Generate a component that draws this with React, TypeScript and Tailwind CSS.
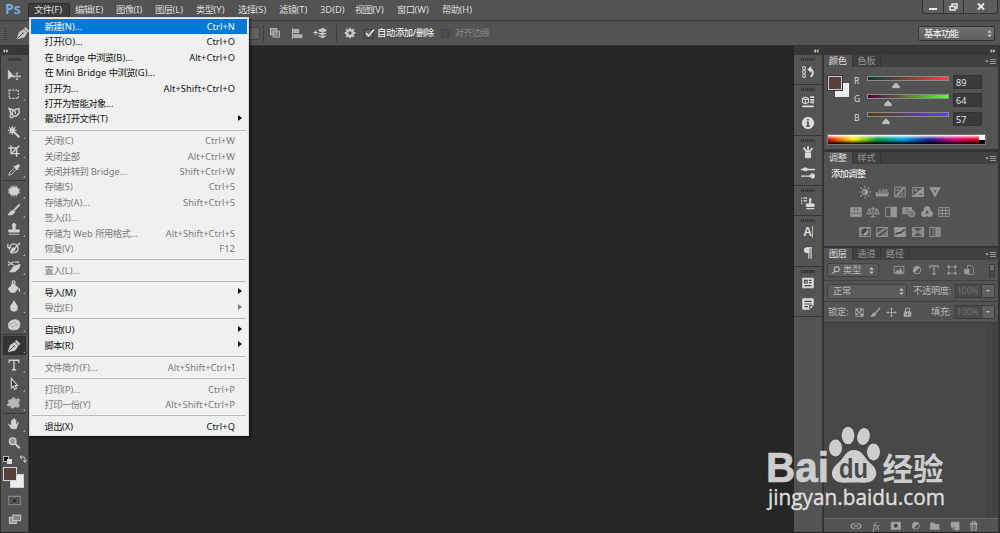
import React from "react";

type MenuEntry = {
  label?: string;
  keys?: string;
  off?: boolean;
  sub?: boolean;
  active?: boolean;
};

const menus = [
  { label: "编辑(E)", width: "w-[41px]" },
  { label: "图像(I)", width: "w-[39px]" },
  { label: "图层(L)", width: "w-[41px]" },
  { label: "类型(Y)", width: "w-[42px]" },
  { label: "选择(S)", width: "w-[41px]" },
  { label: "滤镜(T)", width: "w-[41px]" },
  { label: "3D(D)", width: "w-[35px]" },
  { label: "视图(V)", width: "w-[42px]" },
  { label: "窗口(W)", width: "w-[45px]" },
  { label: "帮助(H)", width: "w-[41px]" },
];

// an empty entry is a separator
const fileMenu: MenuEntry[] = [
  { label: "新建(N)...", keys: "Ctrl+N", active: true },
  { label: "打开(O)...", keys: "Ctrl+O" },
  { label: "在 Bridge 中浏览(B)...", keys: "Alt+Ctrl+O" },
  { label: "在 Mini Bridge 中浏览(G)..." },
  { label: "打开为...", keys: "Alt+Shift+Ctrl+O" },
  { label: "打开为智能对象..." },
  { label: "最近打开文件(T)", sub: true },
  {},
  { label: "关闭(C)", keys: "Ctrl+W", off: true },
  { label: "关闭全部", keys: "Alt+Ctrl+W", off: true },
  { label: "关闭并转到 Bridge...", keys: "Shift+Ctrl+W", off: true },
  { label: "存储(S)", keys: "Ctrl+S", off: true },
  { label: "存储为(A)...", keys: "Shift+Ctrl+S", off: true },
  { label: "签入(I)...", off: true },
  { label: "存储为 Web 所用格式...", keys: "Alt+Shift+Ctrl+S", off: true },
  { label: "恢复(V)", keys: "F12", off: true },
  {},
  { label: "置入(L)...", off: true },
  {},
  { label: "导入(M)", sub: true },
  { label: "导出(E)", sub: true, off: true },
  {},
  { label: "自动(U)", sub: true },
  { label: "脚本(R)", sub: true },
  {},
  { label: "文件简介(F)...", keys: "Alt+Shift+Ctrl+I", off: true },
  {},
  { label: "打印(P)...", keys: "Ctrl+P", off: true },
  { label: "打印一份(Y)", keys: "Alt+Shift+Ctrl+P", off: true },
  {},
  { label: "退出(X)", keys: "Ctrl+Q" },
];

// All glyphs are drawn on a 16x16 grid
const glyphs: Record<string, React.ReactNode> = {
  move: (
    <>
      <path d="M1.500 2.500v10L4.500 10H8z" fill="currentColor" />
      <path d="M11.500 5.500v8M7.500 9.500h8M10.300 6.700l1.200-1.400 1.200 1.400M10.300 12.300l1.200 1.400 1.200-1.400M8.700 8.300L7.300 9.500l1.400 1.200M14.300 8.300l1.400 1.200-1.400 1.200" />
    </>
  ),
  marquee: <rect x="2.500" y="3.500" width="10.500" height="9.500" strokeDasharray="2.200 1.300" strokeWidth="1.300" />,
  lasso: (
    <>
      <path d="M5 10L2.500 3l5 1.500L13.500 3l.5 5-3.500 3.500H7" strokeWidth="1.700" />
      <path d="M6 9.500V7a1.800 1.800 0 0 1 3.600 0v2M5 9.500c-2.500 1-2 4 .5 4 2 0 2.500-2.500 0-4z" strokeWidth="1.400" />
    </>
  ),
  wand: (
    <>
      <path d="M7 7l7 7" strokeWidth="2.400" />
      <path d="M6 1v3M6 8v3M1 6h3M8 6h3M2.500 2.500l2 2M9.500 2.500l-2 2M2.500 9.500l2-2" strokeWidth="1.400" />
      <circle cx="6" cy="6" r="2.500" fill="currentColor" />
    </>
  ),
  crop: <path d="M4.500 1.500V11h10M1.500 4.500H11v10M6 10l8-8" strokeWidth="1.700" />,
  dropper: (
    <>
      <path d="M2 14l1-3 6-6 2 2-6 6z" />
      <path d="M8 4l4 4 1-1-1-1 2-2c1-1-1-3-2-2l-2 2-1-1z" fill="currentColor" />
    </>
  ),
  heal: (
    <>
      <rect x="3" y="4" width="10" height="8" rx="3" fill="currentColor" />
      <path d="M5 2v12M7 1.500v13M9 1.500v13M11 2v12M1 6h14M1 8h14M1 10h14" strokeWidth=".9" />
    </>
  ),
  brush: (
    <>
      <path d="M14.500 1.500L8 8.500" strokeWidth="2" />
      <path d="M8.800 9.500C8.500 13 5 14 1 13.500c2-.5 2-4 5-5z" fill="currentColor" />
    </>
  ),
  stamp: (
    <path d="M8 1.500a2.300 2.300 0 0 1 1.300 4V9H14v2.500H2V9h4.700V5.500A2.300 2.300 0 0 1 8 1.500zM2 14h12" fill="currentColor" />
  ),
  historyBrush: (
    <>
      <path d="M3 10a5 5 0 1 1 9 1c-1.500 3-6 3.500-8.500 1.500M1 3.500v4h4" strokeWidth="1.400" />
      <path d="M15 2L9 8M9 9c0 2-3 3.500-5 3 2-.5 1-3 3-4z" fill="currentColor" strokeWidth="1.600" />
    </>
  ),
  eraser: (
    <>
      <path d="M3 13.500L8 7l7-2-1.500 4.500-4.500 4z" fill="currentColor" />
      <path d="M1 2l7 4M1 6l7-4M9 2.500h5" strokeWidth="1.500" />
    </>
  ),
  bucket: (
    <>
      <path d="M1.500 10L7 4l6 5-4 5H4z" fill="currentColor" />
      <path d="M6 8V2.500a1.500 1.500 0 0 1 3 0V5M14 9.500v4" strokeWidth="1.500" />
    </>
  ),
  drop: <path d="M8 2c1 3 4 5 4 8a4 4 0 0 1-8 0c0-3 3-5 4-8z" fill="currentColor" />,
  sponge: (
    <>
      <path d="M3 4.500c3-3 8-3 10.500-1 2 2 1 8-1 9-3 1.500-8.500 1.500-10-.5-1-1-1-6.500.5-7.500z" fill="currentColor" />
      <path d="M4 7l2-1M7 5.500l3-.5M5 10h3M9 8h3M3 8.500h1" stroke="#8a8a8a" strokeWidth=".9" />
    </>
  ),
  pen: (
    <>
      <path d="M1.500 14.500L4 7l5-3 3.500 3.500-3 5z" fill="currentColor" />
      <path d="M10 2l4.500 4.500" strokeWidth="2.300" />
      <path d="M2 14l5-5" stroke="#444" />
      <circle cx="7.800" cy="8.300" r="1" fill="#444" stroke="none" />
    </>
  ),
  type: <path d="M2.500 5.500V2.500h11v3M8 2.500v11M5.500 13.500h5" strokeWidth="1.600" />,
  arrow: <path d="M5 1.500v11l2.300-2 1.500 3.500 2-.8-1.500-3.300H12z" fill="#363636" strokeWidth="1.300" />,
  shape: <path d="M5.500 5.500C4.500 1 9 1 10 4.500c4-3 6 0 2.500 3.500C16 12 13 14 9.500 12c-2.500 3-6 2-5-1.500-5 2.500-5-1-2-2.500-2.500-3 0-5 3-2.500z" fill="currentColor" opacity=".78" />,
  hand: (
    <path d="M5 14L1.500 9c-.5-1.200 1-1.600 2-.5L4.500 9V4c0-1.200 1.500-1.200 1.500 0V2.500c0-1.200 1.600-1.200 1.600 0V2c0-1.200 1.600-1.200 1.600 0v1c0-1.200 1.600-1 1.600.3V8l1-2c.6-1 2-.5 1.500.7L12 11l-1 3z" fill="currentColor" stroke="#555" strokeWidth=".4" />
  ),
  zoom: (
    <>
      <circle cx="6.500" cy="6" r="3.800" strokeWidth="1.500" fill="#999" />
      <path d="M9.500 9l5 5" strokeWidth="2.200" />
    </>
  ),
  mask: (
    <>
      <rect x="2" y="3.500" width="12" height="9" fill="#484848" stroke="#999" />
      <circle cx="8" cy="8" r="3" stroke="#999" strokeDasharray="1.200 .8" fill="#333" />
    </>
  ),
  screen: (
    <>
      <rect x="1.500" y="6" width="8" height="7" fill="#999" />
      <rect x="5.500" y="3.500" width="9" height="6.500" fill="#888" />
    </>
  ),
  history: (
    <>
      <path d="M2 2h3v3H2zM2 6.500h3v3H2zM2 11h3v3H2z" />
      <path d="M11 13.500c4-3 3-8.500-1-8.500" strokeWidth="2" />
      <path d="M11.500 1.500v7L7.500 5z" fill="currentColor" strokeWidth=".5" />
    </>
  ),
  props: (
    <>
      <path d="M1.500 4L5 2.500 8.500 4v4.500L5 10 1.500 8.500zM1.500 4L5 5.500 8.500 4M5 5.500V10" strokeWidth="1.200" />
      <path d="M10.500 2.500H15M10.500 5.500H15M10.500 8.500H15M1.500 13h13" strokeWidth="2" />
    </>
  ),
  info: (
    <>
      <circle cx="8" cy="8" r="6.500" fill="currentColor" />
      <path d="M6.500 7H8v4.500M6 11.500h4M8 3.500v1.600" stroke="#444" strokeWidth="1.700" />
    </>
  ),
  brushes: (
    <>
      <path d="M5 9h6v5.500H5z" fill="currentColor" />
      <path d="M6.500 8L3 3M8 8V1.500M9.500 8L13 3.500" strokeWidth="2" />
    </>
  ),
  presets: (
    <>
      <path d="M0 4h16M0 11.500h16" strokeWidth="1.500" />
      <path d="M2 4c2-3 4-2 6 0-2 2-4 2-6 0zM10 11.500c1-3 3-3 5-2v4c-2 1-4 0-5-2z" fill="currentColor" />
    </>
  ),
  clone: (
    <>
      <path d="M9.500 3h2l-.5 6h4v3H6V9h4z" fill="currentColor" />
      <path d="M0 2.500h1.500M3 2.500h4M0 5.500h1.500M3 5.500h4M0 8.500h1.500M6 14.500h9" strokeWidth="1.300" />
    </>
  ),
  paragraph: (
    <>
      <path d="M9 2H6.500a2.800 2.800 0 0 0 0 5.600H9z" fill="currentColor" />
      <path d="M12.500 2H7M9 2v12.500M11.500 2v12.500" strokeWidth="1.300" />
    </>
  ),
  comps: (
    <>
      <rect x="2" y="2.500" width="12" height="11" fill="currentColor" />
      <path d="M4 5h3v3H4zM9 5h3M9 7.500h3M4 11h8" stroke="#444" strokeWidth="1.300" />
    </>
  ),
  notes: (
    <>
      <path d="M2 2h12v8l-4 4H2z" fill="currentColor" />
      <path d="M4 5h8M4 8h8M4 11h4M10 14v-4h4" stroke="#444" strokeWidth="1.300" />
    </>
  ),
  sun: (
    <>
      <circle cx="8" cy="8" r="3" strokeWidth="1.300" />
      <path d="M8 5a3 3 0 0 1 0 6z" fill="currentColor" />
      <path d="M8 1v2M8 13v2M1 8h2M13 8h2M3 3l1.500 1.500M11.500 11.500L13 13M13 3l-1.500 1.500M3 13l1.500-1.500" strokeWidth="1.400" />
    </>
  ),
  levels: (
    <>
      <path d="M1 11.500h14" strokeWidth="3" />
      <path d="M1.500 8v3M3.500 7v4M5.500 4.500V11M7.500 7v4M9.500 4.500V11M11.500 5.500V11M13.500 4.500V11M15 8v3" strokeWidth="1.100" />
    </>
  ),
  curves: (
    <>
      <rect x="2" y="2.500" width="12" height="11" />
      <path d="M6 3v10M10 3v10M2 6h12M2 10h12" strokeWidth=".6" />
      <path d="M2.500 13C9 12 7 4 13.500 3" strokeWidth="1.500" />
    </>
  ),
  exposure: (
    <>
      <rect x="2" y="3" width="12" height="10" />
      <path d="M2 13L14 3v10z" fill="currentColor" />
      <path d="M3.500 6h4M5.500 4v4" />
      <path d="M9 10.500h4" stroke="#444" />
    </>
  ),
  vibrance: <path d="M2 3h12L8 13.500zM5.500 5.500L8 10l2.500-4.500z" fill="currentColor" fillRule="evenodd" />,
  hue: (
    <>
      <rect x="2" y="3" width="12" height="10" fill="currentColor" />
      <path d="M6 3v4M10 3v4" stroke="#555" />
      <path d="M3 9.500h10" stroke="#777" strokeWidth="2" />
    </>
  ),
  balance: <path d="M8 2v11M5 13.500h6M3 4.500h10M3.500 5L1 10h5zM12.500 5L10 10h5z" strokeWidth="1.200" />,
  bw: (
    <>
      <rect x="2" y="2.500" width="12" height="11" />
      <path d="M8 3h6v10H8z" fill="currentColor" />
    </>
  ),
  photo: (
    <>
      <path d="M1 3h10v7H1z" fill="currentColor" />
      <circle cx="5.500" cy="6.500" r="2" stroke="#555" />
      <circle cx="11" cy="10" r="3.800" fill="#777" />
    </>
  ),
  mixer: (
    <>
      <circle cx="8" cy="5" r="3.300" fill="currentColor" />
      <circle cx="5" cy="10" r="3.300" fill="currentColor" />
      <circle cx="11" cy="10" r="3.300" fill="currentColor" />
      <path d="M8 6.500L6.500 9.500h3z" fill="#555" stroke="#555" />
    </>
  ),
  table: (
    <>
      <rect x="2" y="3" width="12" height="10" />
      <path d="M6 3v10M10 3v10M2 6.300h12M2 9.600h12" />
    </>
  ),
  invert: (
    <>
      <rect x="2" y="3" width="12" height="10" />
      <path d="M2 3h12L2 13z" fill="currentColor" opacity=".7" />
      <path d="M10.500 5.500a3.500 3.500 0 0 1-5 5z" fill="currentColor" />
      <path d="M10.500 5.500a3.500 3.500 0 0 0-5 5z" fill="#444" stroke="#444" />
    </>
  ),
  posterize: (
    <>
      <rect x="2" y="3" width="12" height="10" />
      <path d="M2 10l10-7h2L2 12z" fill="currentColor" opacity=".8" />
      <path d="M6 13l8-6v6z" fill="currentColor" opacity=".6" />
    </>
  ),
  threshold: (
    <>
      <rect x="2" y="3" width="12" height="10" fill="currentColor" />
      <path d="M2.500 11l3-2h3l5-4" stroke="#454545" strokeWidth="2" />
    </>
  ),
  selective: (
    <>
      <rect x="2" y="3" width="12" height="10" />
      <path d="M2 3l6 5-6 5zM14 3L8 8l6 5z" fill="currentColor" opacity=".75" />
    </>
  ),
  gradient: (
    <>
      <rect x="2" y="3" width="12" height="10" />
      <path d="M5 3.500h8.500v9H5z" fill="currentColor" opacity=".35" stroke="none" />
      <path d="M9 3.500h4.500v9H9z" fill="currentColor" opacity=".6" stroke="none" />
    </>
  ),
  image: (
    <>
      <rect x="1.500" y="3" width="13" height="10" />
      <path d="M3 12l3-4 2 2 2-4 3 6z" fill="currentColor" />
    </>
  ),
  adjust: (
    <>
      <circle cx="8" cy="8" r="5" strokeWidth="1.300" />
      <path d="M11.500 4.500A5 5 0 0 0 4.500 11.500z" fill="currentColor" />
    </>
  ),
  frame: (
    <>
      <rect x="4" y="4" width="8" height="8" />
      <path d="M2 2h3v3H2zM11 2h3v3h-3zM2 11h3v3H2zM11 11h3v3h-3z" fill="currentColor" strokeWidth=".3" />
    </>
  ),
  smart: (
    <>
      <path d="M6 2h5l3 3v9H6z" />
      <path d="M2 7h6v6H2z" fill="currentColor" />
    </>
  ),
  checker: (
    <>
      <rect x="2.500" y="2.500" width="11" height="11" />
      <path d="M3 3h3v3H3zM9 3h3v3H9zM6 6h3v3H6zM3 9h3v3H3zM9 9h4v4H9z" fill="currentColor" stroke="none" />
    </>
  ),
  cross: <path d="M8 1.500v13M1.500 8h13M6 3.500l2-2 2 2M6 12.500l2 2 2-2M3.500 6l-2 2 2 2M12.500 6l2 2-2 2" strokeWidth="1.400" />,
  lock: (
    <>
      <rect x="3" y="7" width="10" height="7" fill="currentColor" />
      <path d="M5 7V4.500a3 3 0 0 1 6 0V7" strokeWidth="1.600" />
      <path d="M8 9v3" stroke="#444" strokeWidth="1.500" />
    </>
  ),
  link: <path d="M7 5H4.500a3 3 0 0 0 0 6H7M9 5h2.500a3 3 0 0 1 0 6H9M5 8h6" strokeWidth="1.500" />,
  layerMask: (
    <>
      <rect x="1.500" y="3" width="13" height="10" fill="currentColor" />
      <circle cx="8" cy="8" r="2.700" fill="#444" stroke="none" />
    </>
  ),
  folder: <path d="M2 4h5l1.500 2H14v7H2z" fill="currentColor" />,
  sheet: (
    <>
      <path d="M3 3h11v11H9V9H3z" fill="currentColor" />
      <path d="M3.500 10.500h4v3.500z" />
    </>
  ),
  trash: <path d="M2.500 4.500h11M6 4V2.500h4V4M4 6l.5 8h7l.5-8zM6.500 7v5M9.500 7v5" strokeWidth="1.400" />,
  pathOps: (
    <>
      <rect x="2" y="2" width="8.500" height="8.500" fill="#888" />
      <rect x="5.500" y="5.500" width="8.500" height="8" fill="#777" />
      <path d="M7 7h3v3H7z" fill="#444" />
    </>
  ),
  align: (
    <>
      <path d="M2 1.500v13" strokeWidth="1.300" />
      <path d="M3.500 3h6v4h-6zM3.500 9.500h10V13h-10z" fill="#aaa" />
    </>
  ),
  arrange: (
    <>
      <path d="M6 5l5-2.500L15.500 5 11 7.500zM6 8l5 2.500L15.500 8M6 11l5 2.500 4.500-2.500" fill="currentColor" />
      <path d="M.5 7.500h5M3 5v5" strokeWidth="1.400" />
    </>
  ),
  gear: (
    <>
      <circle cx="8" cy="8" r="3.900" strokeWidth="3.200" />
      <path d="M8 1v2M8 13v2M1 8h2M13 8h2M3 3l1.500 1.500M11.500 11.500L13 13M13 3l-1.500 1.500M4.500 11.500L3 13" strokeWidth="2.400" />
    </>
  ),
};

const Glyph = ({ name, className = "size-[14px]" }: { name: string; className?: string }) => (
  <svg viewBox="0 0 16 16" className={`shrink-0 ${className}`} fill="none" stroke="currentColor" strokeWidth="1">
    {glyphs[name]}
  </svg>
);

const toolGroups = [
  ["move", "marquee", "lasso", "wand", "crop", "dropper"],
  ["heal", "brush", "stamp", "historyBrush", "eraser", "bucket", "drop", "sponge"],
  ["pen", "type", "arrow", "shape"],
  ["hand", "zoom"],
];

const dockGroups = [
  { icons: ["history"], height: "h-[30px]" },
  { icons: ["props", "info"], height: "h-[51px]" },
  { icons: ["brushes", "presets"], height: "h-[50px]" },
  { icons: ["clone"], height: "h-[30px]" },
  { icons: ["character", "paragraph"], height: "h-[51px]" },
  { icons: ["comps", "notes"], height: "h-[50px]" },
];

const channels = [
  { name: "R", value: 89, bar: "bg-[linear-gradient(90deg,#004039,#ff4039)]" },
  { name: "G", value: 64, bar: "bg-[linear-gradient(90deg,#590039,#59ff39)]" },
  { name: "B", value: 57, bar: "bg-[linear-gradient(90deg,#594000,#5940ff)]" },
];

const adjustments = [
  ["sun", "levels", "curves", "exposure", "vibrance"],
  ["hue", "balance", "bw", "photo", "mixer", "table"],
  ["invert", "posterize", "threshold", "selective", "gradient"],
];

const Grip = () => (
  <div className="mx-auto h-[3px] w-[14px] shrink-0 bg-[repeating-linear-gradient(90deg,#333_0_1px,#484848_1px_2px)]" />
);

const Chevrons = ({ left = false }: { left?: boolean }) => (
  <svg viewBox="0 0 6 5" className={`h-[4px] w-[6px] ${left ? "rotate-180" : ""}`} fill="#c8c8c8">
    <path d="M0 0l2.700 2.500L0 5zM3.200 0L6 2.500 3.200 5z" />
  </svg>
);

const UpDown = () => (
  <svg viewBox="0 0 5 8" className="h-[7px] w-[5px]" fill="#c4c4c4">
    <path d="M0 3l2.500-3L5 3zM0 5h5L2.500 8z" />
  </svg>
);

// Chinese characters are set tighter than the Latin runs beside them
const Label = ({ text }: { text: string }) => (
  <span className="flex-1 whitespace-pre">
    {text.split(/([\u4e00-\u9fff]+)/).map((part, i) => (
      <span key={i} className={i % 2 ? "tracking-[-0.53px]" : "tracking-[0.02px]"}>
        {part}
      </span>
    ))}
  </span>
);

const FileMenu = () => (
  <div className="absolute left-[29px] top-[17px] z-10 h-[419px] w-[219.500px] border border-[#d8d8d8] bg-[#f0f0f0] p-px text-[9.300px] shadow-[2px_2px_2px_rgba(0,0,0,.45)]">
    {fileMenu.map((item, i) =>
      item.label ? (
        <div
          key={i}
          className={`flex h-[15.400px] items-center pl-[13.500px] pt-[0.600px] ${item.sub ? "pr-[5px]" : "pr-[11.500px]"} ${
            item.active ? "bg-[#0078d7] text-white" : item.off ? "text-[#7b7b7b]" : "text-[#111]"
          }`}
        >
          <Label text={item.label} />
          {item.keys && <span className="whitespace-nowrap tracking-[0.080px]">{item.keys}</span>}
          {item.sub && (
            <svg viewBox="0 0 4 6" className="-mt-[3px] h-[6px] w-[4px]" fill="currentColor">
              <path d="M0 0l4 3-4 3z" />
            </svg>
          )}
        </div>
      ) : (
        <div key={i} className="flex h-[6.550px] items-center px-[1px]">
          <div className="h-px w-full bg-[#bbb]" />
        </div>
      )
    )}
  </div>
);

const MenuBar = () => (
  <div className="flex h-[20px] shrink-0 bg-[#535353] text-[9.300px] text-[#dcdcdc]">
    <div className="w-[28px] pl-[5px] font-['Open_Sans'] text-[14px] font-bold leading-[18px] text-[#78a9d8]">Ps</div>
    <div className="mt-[3px] h-[17px] w-[42px] rounded-t-[2px] border border-[#2c2c2c] bg-[#3c3c3c] pl-[5px] leading-[12px]">
      <Label text="文件(F)" />
    </div>
    <div className="flex flex-1 pl-[5px] leading-[20px]">
      {menus.map((menu) => (
        <div key={menu.label} className={menu.width}>
          <Label text={menu.label} />
        </div>
      ))}
    </div>
    <div className="mr-[2px] flex h-[14px] rounded-b-[3px] border border-t-0 border-[#353535] bg-[#5d5d5d]">
      <div className="flex w-[21px] items-center justify-center border-r border-[#353535]">
        <div className="mt-[4px] h-[2px] w-[8px] bg-[#e8e8e8]" />
      </div>
      <div className="flex w-[20px] items-center justify-center border-r border-[#353535] text-[#e8e8e8]">
        <svg viewBox="0 0 9 8" className="h-[8px] w-[9px]" fill="none" stroke="currentColor" strokeWidth="1.500">
          <path d="M3 3V1h5v4H6M1 3.500h5V7H1z" />
        </svg>
      </div>
      <div className="flex w-[33px] items-center justify-center text-[#e8e8e8]">
        <svg viewBox="0 0 8 7" className="h-[7px] w-[8px]" stroke="currentColor" strokeWidth="2">
          <path d="M1 .5l6 6M7 .5l-6 6" />
        </svg>
      </div>
    </div>
  </div>
);

const OptionsBar = () => (
  <div className="flex h-[26px] shrink-0 items-center border-y border-t-[#383838] border-b-[#333] bg-[#535353] text-[9.300px] text-[#c8c8c8]">
    <div className="ml-[4px] h-[14px] w-[3px] bg-[repeating-linear-gradient(0deg,#3b3b3b_0_1px,#5a5a5a_1px_2px)]" />
    <Glyph name="pen" className="ml-[9px] size-[14px]" />
    <div className="ml-[209px] h-[13px] w-[21px] rounded-[2px] border border-[#434343] bg-[#606060]" />
    <div className="ml-[3px] h-[17px] w-px bg-[#3c3c3c]" />
    <Glyph name="pathOps" className="ml-[5px] size-[12px]" />
    <Glyph name="align" className="ml-[10px] size-[13px]" />
    <Glyph name="arrange" className="ml-[9px] size-[14px]" />
    <div className="ml-[9px] h-[17px] w-px bg-[#3c3c3c]" />
    <Glyph name="gear" className="ml-[7px] size-[12px]" />
    <svg viewBox="0 0 11 11" className="ml-[8px] size-[11px]" fill="none">
      <rect x=".5" y="1.500" width="8.500" height="8.500" fill="#606060" stroke="#393939" />
      <path d="M2 5l2.500 3L10 1.500" stroke="#f0f0f0" strokeWidth="1.400" />
    </svg>
    <span className="ml-[2px] whitespace-nowrap tracking-[-0.350px] text-white">自动添加/删除</span>
    <div className="ml-[7px] size-[9px] rounded-[1px] border border-[#414141] bg-[#4c4c4c]" />
    <span className="ml-[5px] whitespace-nowrap tracking-[-0.700px] text-[#888]">对齐边缘</span>
    <div className="ml-auto mr-[5px] mt-[1px] flex h-[15px] w-[77px] items-center justify-between rounded-[2px] border border-[#343434] bg-linear-to-b from-[#707070] to-[#5e5e5e] pl-[5px] pr-[2px] text-white">
      <span className="tracking-[-0.700px]">基本功能</span>
      <UpDown />
    </div>
  </div>
);

const Toolbar = () => (
  <div className="flex w-[29px] shrink-0 flex-col border-x border-x-[#343434] bg-[#535353] text-[#d2d2d2]">
    <div className="flex h-[9px] items-center bg-[#383838] pl-[2px]">
      <Chevrons />
    </div>
    <div className="flex h-[10px] pt-[3px]">
      <Grip />
    </div>
    {toolGroups.map((group, i) => (
      <div key={i} className={i ? "mx-[2px] border-t border-t-[#383838] pt-[1px]" : "mx-[2px]"}>
        {group.map((tool) => (
          <div
            key={tool}
            className={`relative flex h-[19.100px] items-center justify-center pr-px ${
              tool === "pen" ? "rounded-[2px] bg-[#343434] shadow-[inset_0_0_1px_#1e1e1e]" : ""
            }`}
          >
            <Glyph name={tool} />
            {tool !== "move" && tool !== "zoom" && (
              <div className="absolute bottom-[2px] right-[1px] size-[2px] bg-[#b5b5b5] [clip-path:polygon(100%_0,100%_100%,0_100%)]" />
            )}
          </div>
        ))}
      </div>
    ))}
    <div className="flex h-[12px] items-center gap-[7px] pl-[2px]">
      <div className="flex items-end">
        <div className="size-[6px] border border-[#bbb] bg-black" />
        <div className="-mb-[2px] -ml-[2px] size-[5px] bg-[#ddd]" />
      </div>
      <svg viewBox="0 0 8 8" className="size-[8px]" fill="none" stroke="#ccc">
        <path d="M3 .5L1 2l2 2M1 2h3c2 0 2 1 2 4M4.500 5L6 7.500 7.500 5" />
      </svg>
    </div>
    <div className="relative h-[26px]">
      <div className="absolute left-[9px] top-[9px] size-[14px] border border-[#cfcfcf] bg-[#eceaf3]" />
      <div className="absolute left-[2px] top-[2px] size-[14px] border border-[#d4d4d4] bg-[#593f39]" />
    </div>
    <div className="flex h-[19px] items-center justify-center">
      <Glyph name="mask" className="size-[15px]" />
    </div>
    <div className="flex h-[19px] items-center justify-center">
      <Glyph name="screen" />
    </div>
  </div>
);

const Dock = () => (
  <div className="flex w-[28px] shrink-0 flex-col bg-[#535353] text-[#dcdcdc]">
    <div className="flex h-[9px] items-center justify-end bg-[#383838] pr-[3px]">
      <Chevrons left />
    </div>
    {dockGroups.map((group, i) => (
      <div key={i} className={`flex flex-col border-b border-b-[#363636] pt-[3px] ${group.height}`}>
        <Grip />
        <div className="flex flex-1 flex-col items-center justify-around pb-[2px]">
          {group.icons.map((icon) =>
            icon === "character" ? (
              <span key={icon} className="border-r border-[#bbb] font-['Liberation_Sans'] text-[12px] font-bold leading-[12px]">
                A
              </span>
            ) : (
              <Glyph key={icon} name={icon} />
            )
          )}
        </div>
      </div>
    ))}
  </div>
);

const Tabs = ({ names }: { names: string[] }) => (
  <div className="flex h-[12px] shrink-0 bg-[#404040] text-[9.300px] leading-[12px] tracking-[-0.300px] text-[#929292]">
    {names.map((name, i) => (
      <div key={name} className={`w-[28.500px] border-r border-r-[#343434] text-center ${i === 0 ? "bg-[#535353] text-[#dcdcdc]" : ""}`}>
        {name}
      </div>
    ))}
    <svg viewBox="0 0 11 7" className="ml-auto mr-[2px] mt-[3px] h-[7px] w-[11px]" stroke="#aaa">
      <path d="M0 2.500h4L2 4.500z" fill="#aaa" stroke="none" />
      <path d="M5 1.500h6M5 3.500h6M5 5.500h6" strokeWidth=".8" />
    </svg>
  </div>
);

const ColorPanel = () => (
  <div className="flex h-[82px] shrink-0 flex-col">
    <div className="flex">
      <div className="relative w-[30px]">
        <div className="absolute left-[11px] top-[16px] size-[14px] bg-[#eceaf3]" />
        <div className="absolute left-[4px] top-[9px] size-[14px] border border-[#ccc] bg-[#593f39] outline outline-[#333]" />
      </div>
      <div className="flex-1 pt-[6px]">
        {channels.map((c) => (
          <div key={c.name} className="flex h-[18.300px] items-center">
            <span className="-mt-[2px] w-[13px] text-[8.500px] leading-[14px] text-[#dcdcdc]">{c.name}</span>
            <div className="h-[13px] w-[82px]">
              <div className={`h-[5px] border border-[#8a8a8a] ${c.bar}`} />
              <svg
                viewBox="0 0 8 7"
                className="relative mt-px h-[7px] w-[8px]"
                style={{ left: (c.value / 255) * 80 - 3 }}
                fill="#bcbcbc"
              >
                <path d="M4 0l4 4v2.500H0V4z" stroke="#444" strokeWidth=".5" />
              </svg>
            </div>
            <div className="ml-[4px] h-[14px] w-[29px] border border-[#333] bg-[#3a3a3a] pl-[2px] text-[9px] leading-[13px] text-[#e2e2e2]">
              {c.value}
            </div>
          </div>
        ))}
      </div>
    </div>
    <div className="ml-[3px] mt-[6px] flex h-[11px] w-[159px] border border-[#777]">
      <div className="flex-1 bg-[linear-gradient(180deg,#fff_0%,#fff0_45%,#0000_55%,#000_100%),linear-gradient(90deg,#e60012,#fff100_17%,#009944_33%,#00a0e9_50%,#1d2088_67%,#e4007f_84%,#e60012)]" />
      <div className="w-[6px] bg-black">
        <div className="h-[5px] bg-white" />
      </div>
    </div>
  </div>
);

const AdjustPanel = () => (
  <div className="h-[82px] shrink-0 pt-[2px]">
    <div className="pl-[7px] text-[9.300px] leading-[15px] tracking-[-0.750px] text-white">添加调整</div>
    <div className="mt-[1px] text-[#999]">
      {adjustments.map((row, i) => (
        <div key={i} className="flex h-[20px] items-center justify-center gap-[3.700px] pr-[22px]">
          {row.map((icon) => (
            <Glyph key={icon} name={icon} />
          ))}
        </div>
      ))}
    </div>
  </div>
);

const Percent = () => (
  <div className="flex h-[14px] w-[40px] border border-[#3d3d3d] bg-[#4b4b4b] text-[8.500px] leading-[12px] tracking-normal text-[#717171]">
    <span className="flex-1 pl-[1px]">100%</span>
    <div className="flex w-[13px] items-center justify-center border-l border-[#3d3d3d] bg-[#606060]">
      <svg viewBox="0 0 4 2" className="h-[2px] w-[4px]" fill="#bbb">
        <path d="M0 0h4L2 2z" />
      </svg>
    </div>
  </div>
);

const LayersPanel = () => (
  <div className="flex min-h-0 flex-1 flex-col text-[9.300px] tracking-[-0.350px] text-[#b8b8b8]">
    <div className="flex h-[21px] shrink-0 items-center border-b border-[#414141] pl-[3px]">
      <div className="flex h-[14px] w-[52px] items-center rounded-[2px] border border-[#414141] bg-[#5b5b5b] px-[4px]">
        <svg viewBox="0 0 8 8" className="mr-[3px] size-[8px]" fill="none" stroke="currentColor" strokeWidth="1.200">
          <circle cx="4.800" cy="3.200" r="2.500" />
          <path d="M3 5L.5 7.500" />
        </svg>
        <span className="flex-1">类型</span>
        <UpDown />
      </div>
      <div className="ml-[14px] flex flex-1 items-center gap-[5.600px] text-[#9c9c9c]">
        {["image", "adjust", "type", "frame", "smart"].map((icon) => (
          <Glyph key={icon} name={icon} className="size-[12px]" />
        ))}
      </div>
      <div className="mr-[3px] h-[13px] w-[6px] border border-[#3b3b3b] bg-[#484848]">
        <div className="h-[5px] bg-[#6a6a6a]" />
      </div>
    </div>
    <div className="flex h-[21px] shrink-0 items-center border-b border-[#414141] pl-[3px]">
      <div className="flex h-[15px] w-[80px] items-center justify-between rounded-[2px] border border-[#414141] bg-[#5b5b5b] pl-[5px] pr-[2px]">
        正常
        <UpDown />
      </div>
      <span className="ml-[6px] flex-1 whitespace-nowrap">不透明度:</span>
      <Percent />
      <div className="w-[3px]" />
    </div>
    <div className="flex h-[21px] shrink-0 items-center border-b border-[#3a3a3a] pl-[4px]">
      <span className="w-[26px] whitespace-nowrap">锁定:</span>
      <div className="flex gap-[5px] text-[#a8a8a8]">
        {["checker", "brush", "cross", "lock"].map((icon) => (
          <Glyph key={icon} name={icon} className="size-[11px]" />
        ))}
      </div>
      <span className="ml-auto mr-[4px] whitespace-nowrap">填充:</span>
      <Percent />
      <div className="w-[3px]" />
    </div>
    <div className="flex flex-1 justify-end bg-[#474747]">
      <div className="w-[10px] border-l border-[#3e3e3e] bg-[#444]" />
    </div>
    <div className="flex h-[14px] shrink-0 items-center gap-[8px] border-t border-t-[#666] pl-[26px] text-[#a2a2a2]">
      <Glyph name="link" className="size-[12px]" />
      <span className="w-[12px] text-center font-['Liberation_Serif'] text-[11px] italic leading-[10px]">fx</span>
      {["layerMask", "adjust", "folder", "sheet", "trash"].map((icon) => (
        <Glyph key={icon} name={icon} className="size-[11.500px]" />
      ))}
    </div>
  </div>
);

const Watermark = () => (
  <svg viewBox="0 0 190 94" className="absolute left-[762px] top-[421px] z-20 h-[94px] w-[190px]" fill="#cdcdcd">
    <text x="4" y="60.500" textLength="63" lengthAdjust="spacingAndGlyphs" fontFamily="Liberation Sans" fontWeight="700" fontSize="42" stroke="#cdcdcd" strokeWidth=".7">
      Bai
    </text>
    <ellipse cx="73.500" cy="27" rx="6.500" ry="8.500" />
    <ellipse cx="86" cy="14.500" rx="6.300" ry="8.800" />
    <ellipse cx="101.500" cy="15.500" rx="6.300" ry="8.500" transform="rotate(12 101.500 15.500)" />
    <ellipse cx="111.500" cy="31" rx="6.500" ry="8.500" />
    <path d="M92 29c8 0 10 7 16 13 7 5 8 12 4 16-4 5-11 3.500-20 3.500s-16 1.500-20-3.500c-4-5-2-11 4-16 7-6 8-13 16-13z" />
    <text x="77" y="57" textLength="29" lengthAdjust="spacingAndGlyphs" fontFamily="Liberation Sans" fontWeight="700" fontSize="27" fill="#484848">
      du
    </text>
    <text x="120.500" y="59" textLength="61" lengthAdjust="spacingAndGlyphs" fontFamily="Noto Sans CJK SC" fontWeight="700" fontSize="31">
      经验
    </text>
    <text x="6" y="84" textLength="177" lengthAdjust="spacingAndGlyphs" fontFamily="Open Sans" fontSize="21" fill="#dedede" stroke="#dedede" strokeWidth=".4">
      jingyan.baidu.com
    </text>
  </svg>
);

const App = () => {
  return (
    <div className="relative flex h-[533px] w-[1000px] flex-col overflow-hidden bg-[#262626] font-['Noto_Sans','Noto_Sans_CJK_SC',sans-serif]">
      <MenuBar />
      <OptionsBar />
      <div className="flex min-h-0 flex-1 border-b border-[#242424]">
        <Toolbar />
        <div className="flex-1 bg-[#262626]" />
        <Dock />
        <div className="flex w-[178px] flex-col border-x-2 border-[#343434] bg-[#535353]">
          <div className="flex h-[9px] shrink-0 items-center justify-end bg-[#383838] pr-[2px]">
            <Chevrons />
          </div>
          <Tabs names={["颜色", "色板"]} />
          <ColorPanel />
          <div className="h-[3px] shrink-0 bg-[#343434]" />
          <Tabs names={["调整", "样式"]} />
          <AdjustPanel />
          <div className="h-[2px] shrink-0 bg-[#343434]" />
          <Tabs names={["图层", "通道", "路径"]} />
          <LayersPanel />
        </div>
      </div>
      <FileMenu />
      <Watermark />
    </div>
  );
};

export default App;
